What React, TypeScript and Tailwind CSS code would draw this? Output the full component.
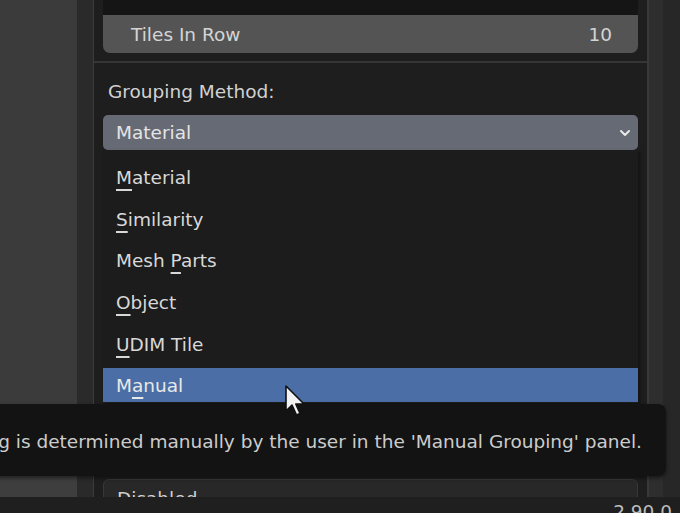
import React from "react";

// Blender-like "Grouping Method" enum dropdown, with tooltip over it

const items: { pre: string; key: string; post: string }[] = [
  { pre: "", key: "M", post: "aterial" },
  { pre: "", key: "S", post: "imilarity" },
  { pre: "Mesh ", key: "P", post: "arts" },
  { pre: "", key: "O", post: "bject" },
  { pre: "", key: "U", post: "DIM Tile" },
  { pre: "M", key: "a", post: "nual" },
];

function Cursor() {
  return (
    <svg
      width="22"
      height="36"
      viewBox="0 0 22 36"
      className="absolute left-[284px] top-[384px]"
    >
      <path
        d="M2 2 L2 27 L8 21 L12.5 31 L16 29.5 L11.8 20 L20 20 Z"
        fill="#f2f2f2"
        stroke="#111"
        strokeWidth="1.6"
        strokeLinejoin="round"
      />
    </svg>
  );
}

export default function App() {
  const selected = 5;
  return (
    <div
      className="relative w-[680px] h-[513px] overflow-hidden bg-[#202020] flex flex-col text-[18.5px]"
      style={{ fontFamily: '"DejaVu Sans", Verdana, sans-serif' }}
    >
      <div className="flex h-[497px]">
        {/* left editor strip */}
        <div className="w-[77px] bg-[#3b3b3b] flex flex-col justify-end">
          <div className="h-[24px] bg-[#3e3e3e] border-t border-[#333]" />
        </div>
        <div className="w-[16px] bg-[#2a2a2a]" />
        <div className="w-px bg-[#3c3c3c]" />

        {/* properties panel */}
        <div className="w-[553px] bg-[#1e1e1e] flex flex-col px-[9px] overflow-hidden">
          <div className="h-[15px] bg-[#151515] shrink-0" />
          <div className="h-[38px] shrink-0 rounded-b-[7px] bg-[#545454] flex items-center justify-between pl-[28px] pr-[26px] text-[#d4d4d4]">
            <span className="pt-px">Tiles In Row</span>
            <span className="pt-px">10</span>
          </div>
          <div className="-mx-[9px] mt-[8px] h-[2px] shrink-0 bg-[#353535]" />

          <div className="mt-[17px] h-[24px] leading-[24px] shrink-0 pl-[5px] text-[#d2d2d2]">
            Grouping Method:
          </div>

          <div className="mt-[11px] h-[35px] shrink-0 rounded-[5px] bg-[#666a74] flex items-center justify-between pl-[13px] pr-[6px] text-[#e4e4e4]">
            <span className="pt-px">Material</span>
            <svg width="14" height="10" viewBox="0 0 14 10">
              <path
                d="M3 3 L7 7 L11 3"
                fill="none"
                stroke="#e8e8e8"
                strokeWidth="2"
                strokeLinecap="round"
                strokeLinejoin="round"
              />
            </svg>
          </div>

          {/* open menu */}
          <div className="h-[253px] shrink-0 bg-[#1c1c1c] flex flex-col gap-[7.6px] pt-[10px] text-[#d8d8d8] shadow-[2px_2px_3px_rgba(0,0,0,0.4)]">
            {items.map((it, i) => (
              <div
                key={i}
                className={`h-[34px] shrink-0 flex items-center pl-[13px] ${
                  i === selected ? "bg-[#4a6ea5] text-[#e8e8e8]" : ""
                }`}
              >
                <span className="whitespace-pre pt-[2px]">
                  {it.pre}
                  <span className="underline decoration-[1.5px] underline-offset-[5px]">
                    {it.key}
                  </span>
                  {it.post}
                </span>
              </div>
            ))}
          </div>

          <div className="mt-[76px] h-[30px] shrink-0 rounded-t-[6px] border border-[#383838] bg-[#282828] pl-[13px] pt-[9px] text-[#d0d0d0] leading-[20px]">
            Disabled
          </div>
        </div>

        <div className="w-[2px] bg-[#393939]" />
        <div className="flex-1 bg-[#2b2b2b] flex">
          <div className="w-[14px] bg-[#2e2e2e]" />
          <div className="flex-1 bg-[#272727]" />
        </div>
      </div>

      {/* status bar */}
      <div className="h-[16px] bg-[#1f1f1f] flex justify-end overflow-hidden">
        <span className="pt-[6px] leading-[18px] text-[#bdbdbd] pr-[8px]">
          2.90.0
        </span>
      </div>

      {/* tooltip */}
      <div className="absolute -left-[200px] right-[14px] top-[404px] h-[72px] rounded-[8px] bg-[#131313] flex items-center justify-end pr-[24px] text-[#cccccc] whitespace-nowrap shadow-[0_2px_4px_rgba(0,0,0,0.5)]">
        <span className="pt-[3px]">
          Grouping is determined manually by the user in the 'Manual Grouping' panel.
        </span>
      </div>

      <Cursor />
    </div>
  );
}
